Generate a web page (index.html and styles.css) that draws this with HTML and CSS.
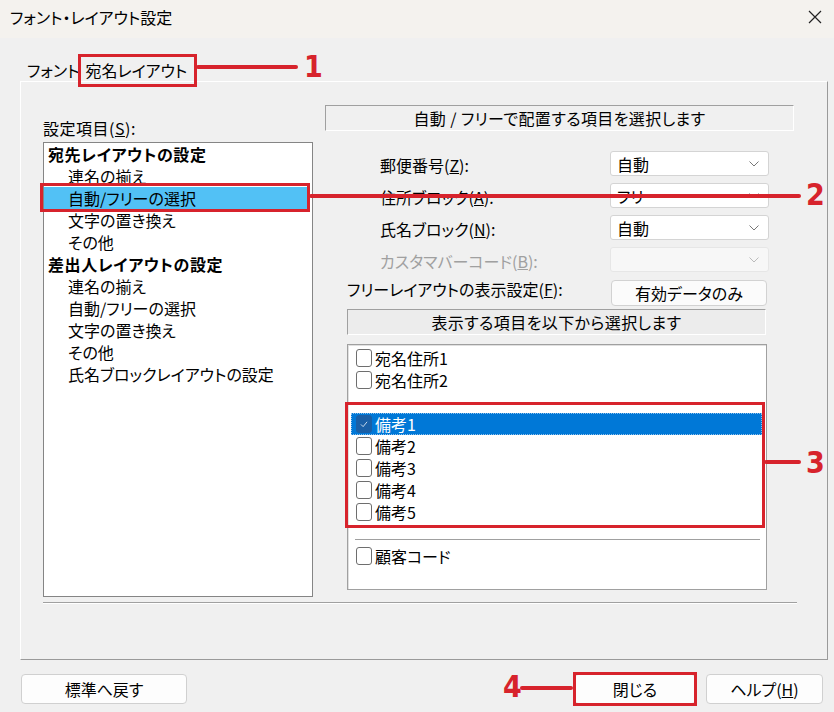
FILE: index.html
```html
<!DOCTYPE html>
<html lang="ja">
<head>
<meta charset="utf-8">
<title>フォント・レイアウト設定</title>
<link rel="stylesheet" href="styles.css">
</head>
<body>
<div class="window">
  <div class="titlebar">
    <span class="title">フォント・レイアウト設定</span>
    <svg class="close" viewBox="0 0 14 14"><path d="M1 1 L13 13 M13 1 L1 13" stroke="#222" stroke-width="1.2" fill="none"/></svg>
  </div>
  <div class="tabs">
    <span class="tab">フォント</span>
    <span class="tab active">宛名レイアウト</span>
  </div>
  <div class="panel">
    <div class="cols">
      <div class="left">
        <div class="label">設定項目(<u>S</u>):</div>
        <ul class="tree">
          <li class="head">宛先レイアウトの設定</li>
          <li>連名の揃え</li>
          <li class="sel">自動/フリーの選択</li>
          <li>文字の置き換え</li>
          <li>その他</li>
          <li class="head">差出人レイアウトの設定</li>
          <li>連名の揃え</li>
          <li>自動/フリーの選択</li>
          <li>文字の置き換え</li>
          <li>その他</li>
          <li>氏名ブロックレイアウトの設定</li>
        </ul>
      </div>
      <div class="right">
        <div class="banner">自動 / フリーで配置する項目を選択します</div>
        <div class="form">
          <span class="flabel">郵便番号(<u>Z</u>):</span>
          <div class="select"><span>自動</span><svg class="chev" viewBox="0 0 10 6"><path d="M0.5 0.5 L5 5 L9.5 0.5" stroke="#777" fill="none"/></svg></div>
          <span class="flabel">住所ブロック(<u>A</u>):</span>
          <div class="select"><span>フリー</span><svg class="chev" viewBox="0 0 10 6"><path d="M0.5 0.5 L5 5 L9.5 0.5" stroke="#777" fill="none"/></svg></div>
          <span class="flabel">氏名ブロック(<u>N</u>):</span>
          <div class="select"><span>自動</span><svg class="chev" viewBox="0 0 10 6"><path d="M0.5 0.5 L5 5 L9.5 0.5" stroke="#777" fill="none"/></svg></div>
          <span class="flabel disabled">カスタマバーコード(<u>B</u>):</span>
          <div class="select disabled"><span></span><svg class="chev" viewBox="0 0 10 6"><path d="M0.5 0.5 L5 5 L9.5 0.5" stroke="#bbb" fill="none"/></svg></div>
        </div>
        <div class="sub">
          <div class="freerow">
            <span>フリーレイアウトの表示設定(<u>F</u>):</span>
            <div class="sbtn">有効データのみ</div>
          </div>
          <div class="banner banner2">表示する項目を以下から選択します</div>
          <div class="checklist">
            <div class="ci"><span class="cb"></span>宛名住所1</div>
            <div class="ci"><span class="cb"></span>宛名住所2</div>
            <div class="blank"></div>
            <div class="ci sel"><span class="cb on"><svg viewBox="0 0 16 18"><path d="M4.5 9.5 L7 12 L11.5 6.5" stroke="#dfe9f5" stroke-width="1" fill="none"/></svg></span>備考1</div>
            <div class="ci"><span class="cb"></span>備考2</div>
            <div class="ci"><span class="cb"></span>備考3</div>
            <div class="ci"><span class="cb"></span>備考4</div>
            <div class="ci"><span class="cb"></span>備考5</div>
            <div class="gsep"></div>
            <div class="ci"><span class="cb"></span>顧客コード</div>
          </div>
        </div>
      </div>
    </div>
    <div class="sep"></div>
  </div>
  <div class="footer">
    <div class="btn b1">標準へ戻す</div>
    <div class="spacer"></div>
    <div class="btn b2">閉じる</div>
    <div class="btn b3">ヘルプ(<u>H</u>)</div>
  </div>

  <div class="anno-box a1"></div>
  <div class="anno-line l1"></div>
  <div class="anno-num n1">1</div>
  <div class="anno-box a2"></div>
  <div class="anno-line l2"></div>
  <div class="anno-num n2">2</div>
  <div class="anno-box a3"></div>
  <div class="anno-line l3"></div>
  <div class="anno-num n3">3</div>
  <div class="anno-box a4"></div>
  <div class="anno-line l4"></div>
  <div class="anno-num n4">4</div>
</div>
</body>
</html>
```
FILE: styles.css
```css
* { box-sizing: border-box; margin: 0; padding: 0; }
html, body { width: 834px; height: 712px; overflow: hidden; }
body {
  background: #f0f0f0;
  font-family: "Noto Sans CJK JP", "Noto Sans", sans-serif;
  font-size: 16px;
  color: #000;
  font-feature-settings: "palt";
}
u { text-decoration: underline; text-underline-offset: 1px; }
.window { position: relative; width: 834px; height: 712px; display: flex; flex-direction: column; }

.titlebar {
  height: 38px; flex: none; background: #f4f2ee;
  display: flex; align-items: center; justify-content: space-between;
  padding: 0 12px 4px 10px;
}
.title { font-size: 16px; line-height: 20px; }
.close { width: 14px; height: 14px; }

.tabs { height: 43px; flex: none; display: flex; align-items: flex-end; padding-left: 27px; gap: 6px; }
.tab { line-height: 22px; }

.panel {
  flex: none; height: 579px; margin: 0 6px 0 20px;
  border-top: 1px solid #fff; border-left: 1px solid #fff;
  border-right: 1px solid #9a9a9a; border-bottom: 1px solid #9a9a9a;
  padding-left: 22px;
  display: flex; flex-direction: column;
}
.cols { display: grid; grid-template-columns: 270px 469px; column-gap: 12px; align-items: start; }

.left { padding-top: 36px; }
.label { line-height: 20px; margin-bottom: 4px; letter-spacing: 0.5px; }
.tree { list-style: none; height: 455px; background: #fff; border: 1px solid #858585; }
.tree li { height: 22px; line-height: 22px; padding-left: 24px; white-space: nowrap; }
.tree li.head { font-weight: bold; padding-left: 4px; letter-spacing: 0.6px; }
.tree li.sel { background: #52c1f5; margin-right: 2px; }

.right { padding-top: 23px; }
.banner {
  height: 26px; line-height: 24px; text-align: center; letter-spacing: 0.4px;
  border-top: 1px solid #a0a0a0; border-left: 1px solid #a0a0a0;
  border-right: 1px solid #fff; border-bottom: 1px solid #fff;
}
.form { margin-top: 20px; display: grid; grid-template-columns: 285px 159px; grid-auto-rows: 25px; row-gap: 7px; }
.flabel { padding-left: 55px; padding-top: 3px; line-height: 22px; white-space: nowrap; }
.flabel.disabled { color: #a0a0a0; }
.select {
  background: #fff; border: 1px solid #d4d4d4; border-radius: 3px;
  display: flex; align-items: center; justify-content: space-between;
  padding: 0 9px 0 6px; line-height: 22px;
}
.select.disabled { background: #f7f7f7; border-color: #e6e6e6; }
.chev { width: 10px; height: 6px; }

.sub { margin-left: 22px; width: 420px; }
.freerow { margin-top: 8px; height: 26px; display: grid; grid-template-columns: 264px 156px; align-items: center; }
.freerow span { white-space: nowrap; margin-top: -8px; }
.sbtn {
  height: 26px; line-height: 24px; text-align: center;
  background: #fbfbfb; border: 1px solid #d2d2d2; border-radius: 4px;
}
.banner2 { margin-top: 3px; width: 419px; background: #ececec; }

.checklist {
  margin-top: 9px; height: 246px; background: #fff;
  border: 1px solid #a0a0a0; box-shadow: inset 1px 1px 0 #e0e0e0;
  padding: 2px 4px 0 3px;
}
.ci { height: 22px; display: flex; align-items: center; gap: 3px; padding-left: 5px; line-height: 22px; }
.cb { width: 16px; height: 18px; border: 1px solid #6e6e6e; border-radius: 3px; background: #fff; flex: none; display: block; }
.cb svg { display: block; width: 14px; height: 16px; }
.ci.sel { background: #0078d7; color: #fff; outline: 1px dotted #8fc1ec; outline-offset: -1px; }
.cb.on { background: #1a5fa6; border-color: #1a5fa6; }
.blank { height: 22px; }
.gsep { height: 1px; background: #a0a0a0; margin: 16px 2px 5px 4px; }

.sep { margin-top: 5px; width: 754px; height: 2px; border-top: 1px solid #a0a0a0; border-bottom: 1px solid #fff; }

.footer { margin-top: 14px; display: flex; padding: 0 11px 0 21px; gap: 10px; }
.btn {
  height: 30px; line-height: 28px; text-align: center;
  background: #fdfdfd; border: 1px solid #d0d0d0; border-radius: 4px;
}
.b1 { width: 166px; }
.b2 { width: 122px; }
.b3 { width: 117px; }
.spacer { flex: 1; }

.anno-box { position: absolute; border: 3px solid #d7232c; }
.anno-line { position: absolute; height: 4px; background: #d7232c; border-radius: 2px; }
.anno-num {
  position: absolute; color: #d7232c; font-weight: bold;
  font-family: "Liberation Sans Narrow", "DejaVu Sans Condensed", "Liberation Sans", sans-serif;
  font-size: 30px; line-height: 30px;
}
.a1 { left: 78px; top: 54px; width: 119px; height: 33px; }
.l1 { left: 196px; top: 65px; width: 102px; }
.n1 { left: 304px; top: 52px; }
.a2 { left: 40px; top: 183px; width: 270px; height: 29px; }
.l2 { left: 309px; top: 194px; width: 492px; }
.n2 { left: 806px; top: 180px; }
.a3 { left: 345px; top: 402px; width: 420px; height: 126px; }
.l3 { left: 764px; top: 460px; width: 37px; }
.n3 { left: 806px; top: 448px; }
.a4 { left: 573px; top: 672px; width: 124px; height: 34px; }
.l4 { left: 520px; top: 686px; width: 53px; }
.n4 { left: 503px; top: 672px; }
```
